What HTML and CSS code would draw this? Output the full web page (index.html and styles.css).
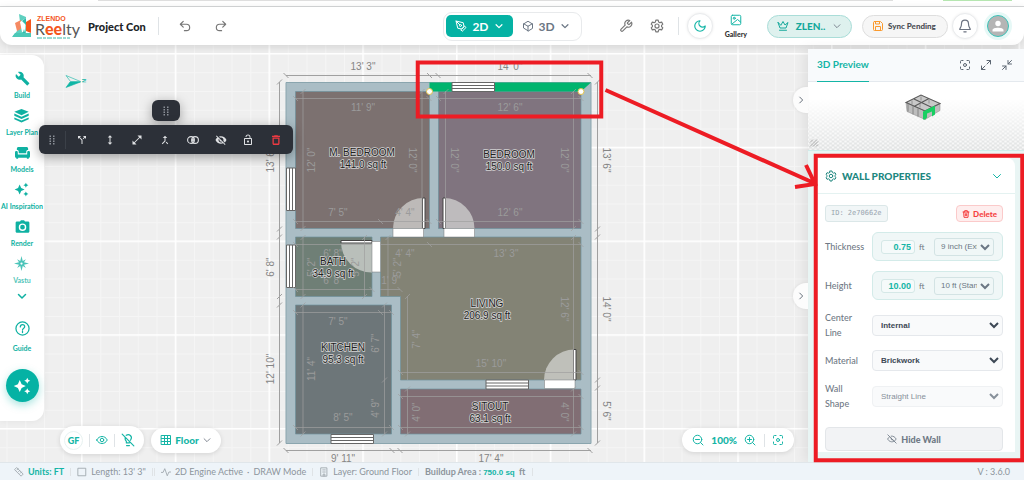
FILE: index.html
```html
<!DOCTYPE html>
<html lang="en">
<head>
<meta charset="utf-8">
<meta name="viewport" content="width=device-width, initial-scale=1">
<title>Project Con - Floor Planner</title>
<link rel="stylesheet" href="styles.css">
</head>
<body>
<svg class="sprite" aria-hidden="true">
  <symbol id="undo" viewBox="0 0 24 24"><path d="M9 14 4 9l5-5M4 9h10.500a5.500 5.500 0 0 1 0 11H11"/></symbol>
  <symbol id="redo" viewBox="0 0 24 24"><path d="m15 14 5-5-5-5M20 9H9.500a5.500 5.500 0 0 0 0 11H13"/></symbol>
  <symbol id="down" viewBox="0 0 24 24"><path d="m5 9 7 7 7-7"/></symbol>
  <symbol id="right" viewBox="0 0 24 24"><path d="m9 5 7 7-7 7"/></symbol>
  <symbol id="pen" viewBox="0 0 24 24"><path d="m12 19 7-7 3 3-7 7zM18 13l-1.500-7.500L2 2l3.500 14.500L13 18zM2 2l7.600 7.600"/><circle cx="11" cy="11" r="2"/></symbol>
  <symbol id="cube" viewBox="0 0 24 24"><path d="M21 16V8l-9-5.500L3 8v8l9 5.500zM3.300 7.500 12 12.500l8.700-5M12 22v-9.500"/></symbol>
  <symbol id="wrench" viewBox="0 0 24 24"><path d="M14.700 6.300a1 1 0 0 0 0 1.400l1.600 1.600a1 1 0 0 0 1.400 0l3.770-3.770a6 6 0 0 1-7.940 7.940l-6.910 6.910a2.120 2.120 0 0 1-3-3l6.910-6.910a6 6 0 0 1 7.940-7.940z"/></symbol>
  <symbol id="gear" viewBox="0 0 24 24"><path d="M10 2h4l.7 3 2.300 1.300 3-.9 2 3.500-2.200 2.100v2l2.200 2.100-2 3.500-3-.9-2.300 1.300-.7 3h-4l-.7-3L7 17.700l-3 .9-2-3.500L4.200 13v-2L2 8.900l2-3.500 3 .9L9.300 5z"/><circle cx="12" cy="12" r="3.500"/></symbol>
  <symbol id="moon" viewBox="0 0 24 24"><path d="M12 3a6 6 0 0 0 9 9 9 9 0 1 1-9-9z"/></symbol>
  <symbol id="image" viewBox="0 0 24 24"><path d="M5 2.500h14a2.500 2.500 0 0 1 2.500 2.500v14a2.500 2.500 0 0 1-2.500 2.500H5A2.500 2.500 0 0 1 2.500 19V5A2.500 2.500 0 0 1 5 2.500zM4 20l11-9 6 5"/><circle cx="8.500" cy="8.500" r="2"/></symbol>
  <symbol id="crown" viewBox="0 0 24 24"><path d="m2 5 4 11h12l4-11-6 5-4-7-4 7zM5 20.500h14"/></symbol>
  <symbol id="save" viewBox="0 0 24 24"><path d="M5 3h12l4 4v12a2 2 0 0 1-2 2H5a2 2 0 0 1-2-2V5a2 2 0 0 1 2-2zM7 3v5h8V3M7 21v-8h10v8"/></symbol>
  <symbol id="bell" viewBox="0 0 24 24"><path d="M6 8a6 6 0 0 1 12 0c0 7 3 7 3 10H3c0-3 3-3 3-10M10 22h4"/></symbol>
  <symbol id="focus" viewBox="0 0 24 24"><path d="M3 8V5a2 2 0 0 1 2-2h3M16 3h3a2 2 0 0 1 2 2v3M21 16v3a2 2 0 0 1-2 2h-3M8 21H5a2 2 0 0 1-2-2v-3"/><circle cx="12" cy="12" r="3"/></symbol>
  <symbol id="expand" viewBox="0 0 24 24"><path d="M14 3h7v7M10 21H3v-7M21 3l-7 7M3 21l7-7"/></symbol>
  <symbol id="shrink" viewBox="0 0 24 24"><path d="M14 3v7h7M3 14h7v7M14 10l7-7M10 14l-7 7"/></symbol>
  <symbol id="trash" viewBox="0 0 24 24"><path d="M3 6h18M5 6l1 16h12l1-16M8 6V2h8v4M10 11v6M14 11v6"/></symbol>
  <symbol id="eye" viewBox="0 0 24 24"><path d="M1.500 12C4 7 8 5 12 5s8 2 10.500 7C20 17 16 19 12 19S4 17 1.500 12z"/><circle cx="12" cy="12" r="3.500"/></symbol>
  <symbol id="eye-off" viewBox="0 0 24 24"><path d="M10 5c5-.7 9.500 2.500 12 7l-2.500 3.500M6 7c-2 1.200-3.600 3-4.500 5C5 18.500 12 21 18 17M10 10a3 3 0 0 0 4 4M2 2l20 20"/></symbol>
  <symbol id="bulb-off" viewBox="0 0 24 24"><path d="M2 2l20 20M9 4c5-3.500 11 2 8 7l-1 1.500M7 8c-.5 3 .8 4.800 2.200 6.500V17h5M9.500 21.500h5"/></symbol>
  <symbol id="grid" viewBox="0 0 24 24"><path d="M3 3h18v18H3zM3 9h18M3 15h18M9 3v18M15 3v18"/></symbol>
  <symbol id="zoom-out" viewBox="0 0 24 24"><circle cx="11" cy="11" r="8.500"/><path d="m22 22-5-5M7 11h8"/></symbol>
  <symbol id="zoom-in" viewBox="0 0 24 24"><circle cx="11" cy="11" r="8.500"/><path d="m22 22-5-5M7 11h8M11 7v8"/></symbol>
  <symbol id="help" viewBox="0 0 24 24"><circle cx="12" cy="12" r="10.500"/><path d="M8.500 9.500c0-5 7-4.500 7-.5 0 2.500-3.500 2.500-3.500 5.500M12 16.500v2"/></symbol>
  <symbol id="ruler" viewBox="0 0 24 24"><path d="m7 2 15 15-5 5L2 7zM7 7l3-3M11 11l3-3M15 15l3-3"/></symbol>
  <symbol id="square" viewBox="0 0 24 24"><path d="M3 3h18v18H3z"/></symbol>
  <symbol id="pulse" viewBox="0 0 24 24"><path d="M1 13h4l4-9 6 17 4-9h4"/></symbol>
  <symbol id="building" viewBox="0 0 24 24"><path d="M5 2h14v20H5zM9 7h2M13 7h2M9 12h2M13 12h2M10 22v-5h4v5"/></symbol>
  <symbol id="build" viewBox="0 0 24 24"><path d="M22.700 19l-9.100-9.100c.9-2.300.4-5-1.500-6.900-2-2-5-2.400-7.400-1.300L9 6 6 9 1.600 4.700C.4 7.100.9 10.100 2.900 12.100c1.900 1.900 4.600 2.400 6.900 1.500l9.100 9.100c.4.4 1 .4 1.400 0l2.300-2.300c.5-.4.5-1.100.1-1.400z"/></symbol>
  <symbol id="layers" viewBox="0 0 24 24"><path d="M12 1.500 23.500 6 12 11.500.5 6zM.5 8.800 12 14l11.500-5.200v3.400L12 17.500.5 12.200zM.5 15 12 20l11.500-5v3L12 23 .5 18z"/></symbol>
  <symbol id="sofa" viewBox="0 0 24 24"><path d="M3 8V6c0-2 1-3 3-3h12c2 0 3 1 3 3v2c-2 0-3 1-3 3v2H6v-2c0-2-1-3-3-3z"/><path d="M0 12c0-3 4.500-3 4.500 0v3h15v-3c0-3 4.500-3 4.500 0v6c0 1.500-1 2.500-2 2.500V22h-3v-1.500H5V22H2v-1.500c-1 0-2-1-2-2.500z"/></symbol>
  <symbol id="sparkle" viewBox="0 0 24 24"><path d="M19 9l1.250-2.750L23 5l-2.750-1.250L19 1l-1.250 2.750L15 5l2.750 1.250L19 9zm-7.500.5L9 4 6.500 9.500 1 12l5.500 2.500L9 20l2.500-5.500L17 12l-5.500-2.500zM19 15l-1.250 2.750L15 19l2.750 1.250L19 23l1.250-2.750L23 19l-2.750-1.250L19 15z"/></symbol>
  <symbol id="camera" viewBox="0 0 24 24"><path fill-rule="evenodd" d="M3 4h5l1.500-2h5L16 4h5c1 0 2 1 2 2v14c0 1-1 2-2 2H3c-1 0-2-1-2-2V6c0-1 1-2 2-2zm9 3a6 6 0 1 0 0 12 6 6 0 0 0 0-12zm0 2.200a3.800 3.800 0 1 1 0 7.600 3.800 3.800 0 0 1 0-7.600z"/></symbol>
  <symbol id="compass" viewBox="0 0 24 24"><path d="m12 0 2 8 5-3-3 5 8 2-8 2 3 5-5-3-2 8-2-8-5 3 3-5-8-2 8-2-3-5 5 3z"/><circle cx="12" cy="12" r="1.800" fill="#fff"/></symbol>
  <symbol id="grip" viewBox="0 0 24 24"><path d="M7 3h3v3H7zM14 3h3v3h-3zM7 8h3v3H7zM14 8h3v3h-3zM7 13h3v3H7zM14 13h3v3h-3zM7 18h3v3H7zM14 18h3v3h-3z"/></symbol>
  <symbol id="split" viewBox="0 0 24 24"><path d="M14 4l2.290 2.290-2.880 2.880 1.420 1.420 2.880-2.880L20 10V4h-6zm-4 0H4v6l2.290-2.290 4.710 4.700V20h2v-8.410l-5.290-5.300L10 4z"/></symbol>
  <symbol id="height" viewBox="0 0 24 24"><path d="M13 7h3.500L12 2.500 7.500 7H11v10H7.500l4.500 4.500 4.500-4.500H13z"/></symbol>
  <symbol id="diagonal" viewBox="0 0 24 24"><path d="M21 11V3h-8l3.290 3.290-10 10L3 13v8h8l-3.290-3.290 10-10z"/></symbol>
  <symbol id="merge" viewBox="0 0 24 24"><path d="M17 20.410L18.410 19 15 15.590 13.590 17 17 20.410zM7.500 8H11v5.590L5.590 19 7 20.410l6-6V8h3.500L12 3.500 7.500 8z"/></symbol>
  <symbol id="join" viewBox="0 0 24 24"><g fill="none" stroke="currentColor" stroke-width="2.200"><circle cx="8" cy="12" r="6.800"/><circle cx="16" cy="12" r="6.800"/></g><path d="M12 7.500c-2.600 2.600-2.600 6.400 0 9 2.600-2.600 2.600-6.400 0-9z"/></symbol>
  <symbol id="hidden" viewBox="0 0 24 24"><path d="M12 7c2.760 0 5 2.240 5 5 0 .65-.13 1.260-.36 1.830l2.920 2.920c1.510-1.260 2.700-2.890 3.430-4.750-1.730-4.390-6-7.500-11-7.500-1.400 0-2.740.25-3.980.7l2.160 2.160C10.740 7.130 11.350 7 12 7zM2 4.270l2.280 2.280.46.46C3.080 8.300 1.780 10.020 1 12c1.730 4.390 6 7.500 11 7.500 1.550 0 3.030-.3 4.380-.84l.42.42L19.730 22 21 20.730 3.270 3 2 4.270zM7.530 9.800l1.550 1.550c-.05.21-.08.43-.08.65 0 1.660 1.340 3 3 3 .22 0 .44-.03.65-.08l1.550 1.550c-.67.33-1.410.53-2.200.53-2.760 0-5-2.240-5-5 0-.79.2-1.530.53-2.200z"/></symbol>
  <symbol id="lock" viewBox="0 0 24 24"><path d="M12 17c1.100 0 2-.9 2-2s-.9-2-2-2-2 .9-2 2 .9 2 2 2zm6-9h-1V6c0-2.760-2.240-5-5-5S7 3.240 7 6h1.900c0-1.710 1.390-3.100 3.100-3.100 1.710 0 3.100 1.390 3.100 3.100v2H6c-1.100 0-2 .9-2 2v10c0 1.100.9 2 2 2h12c1.100 0 2-.9 2-2V10c0-1.100-.9-2-2-2zm0 12H6V10h12v10z"/></symbol>
  <symbol id="delete" viewBox="0 0 24 24"><path d="M5 19c0 1.700 1 3 3 3h8c2 0 3-1.300 3-3V7H5v12zM7.500 9.500h9V19H7.500V9.500zM16 3.500 15 2.500H9l-1 1H4V6h16V3.500z"/></symbol>
</svg>

<div class="app">
  <svg class="canvas" role="img" aria-label="Ground floor plan">
    <defs>
      <pattern id="minor" x="81.500" y="53.500" width="18.750" height="18.750" patternUnits="userSpaceOnUse"><path d="M0 .5H19M.5 0V19" stroke="#f5f5f5" fill="none"/></pattern>
      <pattern id="major" x="81" y="53" width="93.750" height="93.750" patternUnits="userSpaceOnUse"><path d="M0 .5H94M.5 0V94" stroke="#fff" stroke-width="2" fill="none"/></pattern>
      <g id="win"><path class="window" d="M0 0H42.500V9H0zM0 3H42.500M0 6H42.500"/></g>
      <path id="tb" d="M-2.500-2.500 2.500 2.500"/>
      <path id="tf" d="M-2.500 2.500 2.500-2.500"/>
    </defs>
    <rect width="100%" height="100%" fill="#efefef"/>
    <rect width="100%" height="100%" fill="url(#minor)"/>
    <rect width="100%" height="100%" fill="url(#major)"/>

    <path class="wall" d="M286 82.500H591V443.500H286z"/>
    <g class="rooms">
      <path fill="#7c7170" d="M295.500 91.500H429.500V228.500H295.500z"/>
      <path fill="#80747f" d="M438.500 91.500H581V228.500H438.500z"/>
      <path fill="#6f7f76" d="M295.500 237H372V296.500H295.500z"/>
      <path fill="#6d7679" d="M295.500 305H391.500V434H295.500z"/>
      <path fill="#838375" d="M380.500 237H581V380H400.500V296.500H380.500z"/>
      <path fill="#816e74" d="M400.500 389H581V434H400.500z"/>
    </g>
    <path fill="#00b46e" d="M429.500 82.500H591L581 91.500H429.500z"/>

    <use href="#win" x="452" y="82.500"/>
    <use href="#win" x="331" y="434.500"/>
    <use href="#win" x="486" y="380"/>
    <use href="#win" transform="translate(295.500 168) rotate(90)"/>
    <use href="#win" transform="translate(295.500 245) rotate(90)"/>

    <g class="doors">
      <path class="swing" d="M423.500 228.500V198a30.500 30.500 0 0 0-30.500 30.500z"/>
      <path class="swing" d="M444 228.500V198a30.500 30.500 0 0 1 30.500 30.500z"/>
      <path class="swing" d="M372 242H341a30.500 30.500 0 0 0 31 30.500z"/>
      <path class="swing" d="M574.500 380V349.500A30.500 30.500 0 0 0 544 380z"/>
      <path class="leaf" d="M422.500 198h2.500v30.500h-2.500zM443 198h2.500v30.500H443zM341 240.500h31v2.500h-31zM573.500 349.500h2.500V380h-2.500z"/>
      <path class="gap" d="M393 228.500h30.500v8.500H393zM444 228.500h30.500v8.500H444zM372 241.500h8.500V272H372zM544.500 380H575v8.500h-30.500z"/>
    </g>

    <g class="dim-lines">
      <path d="M286 75.500H591M279.500 82V443M597.500 82V443M286 450.500H591"/>
      <use href="#tb" x="286" y="75.500"/><use href="#tb" x="429.500" y="75.500"/><use href="#tb" x="438" y="75.500"/><use href="#tb" x="590" y="75.500"/>
      <use href="#tb" x="286" y="450.500"/><use href="#tb" x="392" y="450.500"/><use href="#tb" x="400" y="450.500"/><use href="#tb" x="590" y="450.500"/>
      <use href="#tf" x="279.500" y="82"/><use href="#tf" x="279.500" y="229"/><use href="#tf" x="279.500" y="237"/><use href="#tf" x="279.500" y="296.500"/><use href="#tf" x="279.500" y="305"/><use href="#tf" x="279.500" y="443"/>
      <use href="#tf" x="597.500" y="82"/><use href="#tf" x="597.500" y="229"/><use href="#tf" x="597.500" y="237"/><use href="#tf" x="597.500" y="380"/><use href="#tf" x="597.500" y="388"/><use href="#tf" x="597.500" y="443"/>
    </g>
    <g class="dim-lines inner">
      <path d="M295 98.500H429M303 91V229M422 91V229M295 221.500H429M438 98.500H581M445.500 91V229M573.500 91V229M438 221.500H581M295 244.500H372M295 289.500H372M303 237V296M364.500 237V296M380 244.500H581M388 237V296M380 289.500H400M573.500 237V380M400 372.500H581M407.500 296V380M295 312.500H391M303 305V434M384.500 305V434M295 427.500H391M400 396.500H581M400 427.500H581M407.500 389V434M573.500 389V434"/>
      <use href="#tb" x="295.500" y="98.500"/><use href="#tb" x="429" y="98.500"/><use href="#tb" x="438.500" y="98.500"/><use href="#tb" x="581" y="98.500"/>
      <use href="#tb" x="295.500" y="221.500"/><use href="#tb" x="380.500" y="221.500"/><use href="#tb" x="429" y="221.500"/><use href="#tb" x="438.500" y="221.500"/><use href="#tb" x="581" y="221.500"/>
      <use href="#tf" x="303" y="91.500"/><use href="#tf" x="446" y="91.500"/><use href="#tf" x="422" y="91.500"/><use href="#tf" x="573.500" y="91.500"/>
      <use href="#tf" x="303" y="228.500"/><use href="#tf" x="573.500" y="228.500"/><use href="#tf" x="303" y="237.500"/><use href="#tf" x="364.500" y="237.500"/><use href="#tf" x="388" y="237.500"/><use href="#tf" x="573.500" y="237.500"/>
      <use href="#tb" x="295.500" y="244.500"/><use href="#tb" x="429.500" y="244.500"/><use href="#tb" x="581" y="244.500"/><use href="#tb" x="295.500" y="289.500"/><use href="#tb" x="372" y="289.500"/><use href="#tb" x="400" y="289.500"/>
      <use href="#tf" x="303" y="296.500"/><use href="#tf" x="364.500" y="296.500"/><use href="#tf" x="407.500" y="296.500"/><use href="#tf" x="303" y="305"/><use href="#tf" x="384.500" y="305"/>
      <use href="#tb" x="295.500" y="312.500"/><use href="#tb" x="380.500" y="312.500"/><use href="#tb" x="391.500" y="312.500"/><use href="#tf" x="384.500" y="380"/>
      <use href="#tb" x="400.500" y="372.500"/><use href="#tb" x="581" y="372.500"/><use href="#tb" x="400.500" y="396.500"/><use href="#tb" x="581" y="396.500"/>
      <use href="#tf" x="303" y="434"/><use href="#tf" x="384.500" y="434"/><use href="#tf" x="407.500" y="389"/><use href="#tf" x="407.500" y="434"/><use href="#tf" x="573.500" y="389"/><use href="#tf" x="573.500" y="434"/>
      <use href="#tb" x="295.500" y="427.500"/><use href="#tb" x="391.500" y="427.500"/><use href="#tb" x="400.500" y="427.500"/><use href="#tb" x="581" y="427.500"/>
    </g>

    <g class="dims">
      <text x="363" y="70">13' 3"</text><text x="510" y="70">14' 0"</text>
      <text x="343" y="462">9' 11"</text><text x="491" y="462">17' 4"</text>
      <text transform="translate(274 160) rotate(-90)">13' 6"</text>
      <text transform="translate(274 267) rotate(-90)">6' 8"</text>
      <text transform="translate(274 369) rotate(-90)">12' 10"</text>
      <text transform="translate(603 160) rotate(90)">13' 6"</text>
      <text transform="translate(603 309) rotate(90)">14' 0"</text>
      <text transform="translate(603 411) rotate(90)">5' 6"</text>
    </g>
    <g class="dims inner">
      <text x="363" y="111">11' 9"</text><text x="510" y="111">12' 6"</text>
      <text x="338" y="216">7' 5"</text><text x="405" y="216">4' 4"</text><text x="510" y="216">12' 6"</text>
      <text x="333" y="257">6' 8"</text><text x="333" y="284">6' 8"</text><text x="405" y="257">4' 4"</text><text x="391" y="284">1' 9"</text>
      <text x="506" y="257">13' 3"</text><text x="338" y="325">7' 5"</text><text x="343" y="421">8' 5"</text><text x="491" y="367">15' 10"</text>
      <text transform="translate(315 160) rotate(-90)">12' 0"</text>
      <text transform="translate(409 160) rotate(90)">12' 0"</text>
      <text transform="translate(451 160) rotate(90)">12' 0"</text>
      <text transform="translate(561 160) rotate(90)">12' 0"</text>
      <text transform="translate(315 267) rotate(-90)">5' 2"</text>
      <text transform="translate(359 267) rotate(-90)">5' 2"</text>
      <text transform="translate(401 267) rotate(-90)">5' 2"</text>
      <text transform="translate(561 309) rotate(90)">12' 6"</text>
      <text transform="translate(420 339) rotate(-90)">7' 4"</text>
      <text transform="translate(379 343) rotate(-90)">6' 7"</text>
      <text transform="translate(379 408) rotate(-90)">4' 9"</text>
      <text transform="translate(315 369) rotate(-90)">11' 4"</text>
      <text transform="translate(420 412) rotate(-90)">4' 0"</text>
      <text transform="translate(561 412) rotate(90)">4' 0"</text>
    </g>
    <g class="room-names">
      <text x="362" y="156">M. BEDROOM</text><text x="363" y="168">141.0 sq ft</text>
      <text x="509" y="158">BEDROOM</text><text x="509" y="170">150.0 sq ft</text>
      <text x="333" y="265">BATH</text><text x="333" y="277">34.9 sq ft</text>
      <text x="343" y="351">KITCHEN</text><text x="343" y="363">95.3 sq ft</text>
      <text x="487" y="307">LIVING</text><text x="487" y="319">206.9 sq ft</text>
      <text x="490" y="410">SITOUT</text><text x="490" y="422">63.1 sq ft</text>
    </g>
    <g fill="#fff" stroke="#e3c34b"><circle cx="429.500" cy="91.500" r="3"/><circle cx="581" cy="91.500" r="3"/></g>
    <g class="north"><path d="M66 75.500 80.500 81.500H70.500z" fill="none"/><path d="M66 87.500 80.500 82H70z"/><text transform="translate(82 79) rotate(90)">N</text></g>
  </svg>

  <div class="browser-edge" aria-hidden="true"><span class="address"></span><span class="update"></span></div>

  <header class="topbar">
    <div class="topbar-left">
      <svg class="logo" viewBox="0 0 68 27" role="img" aria-label="Zlendo Realty">
        <path fill="#5fd0c0" d="M7 1 14 4V23H1L5 18 8 9z"/><path fill="#f58a63" d="M3 10 9 7V16L5 18z"/><path fill="#fff" d="M8 9 14 5 13 19H10z"/><path fill="#2fbcab" d="M10 8 14 5V12zM10 23 12 16 14 23z"/><path fill="#f4571e" d="M14 9 19 6V20L14 18z"/><path fill="#4cc8b7" d="M14 20H19V24H0L3 20H11z"/>
        <text x="25" y="8" class="logo-top">ZLENDO</text>
        <text x="23" y="22" class="logo-main">R<tspan class="logo-accent">ee</tspan>lty</text>
        <path d="M25 25H58" stroke="#3ab8aa" stroke-width="1" stroke-dasharray="5 1 3 1"/>
      </svg>
      <h1 class="project">Project Con</h1>
      <span class="rule tall"></span>
      <div class="history">
        <button class="bare" aria-label="Undo"><svg class="icon i14"><use href="#undo"/></svg></button>
        <button class="bare" aria-label="Redo"><svg class="icon i14"><use href="#redo"/></svg></button>
      </div>
    </div>
    <div class="modes">
      <button class="mode active"><svg class="icon i12"><use href="#pen"/></svg>2D<svg class="icon i10 bold"><use href="#down"/></svg></button>
      <button class="mode"><svg class="icon i12"><use href="#cube"/></svg>3D<svg class="icon i10 bold"><use href="#down"/></svg></button>
    </div>
    <div class="topbar-right">
      <button class="bare tool" aria-label="Tools"><svg class="icon i14"><use href="#wrench"/></svg></button>
      <button class="bare tool" aria-label="Settings"><svg class="icon i14"><use href="#gear"/></svg></button>
      <span class="rule tall"></span>
      <button class="round teal" aria-label="Dark mode"><svg class="icon i14"><use href="#moon"/></svg></button>
      <button class="bare gallery"><svg class="icon i12 teal"><use href="#image"/></svg>Gallery</button>
      <button class="plan"><svg class="icon i12"><use href="#crown"/></svg>ZLEN..<svg class="icon i10 grey"><use href="#down"/></svg></button>
      <button class="sync"><svg class="icon i12 orange"><use href="#save"/></svg>Sync Pending</button>
      <button class="round grey" aria-label="Notifications"><svg class="icon i14"><use href="#bell"/></svg></button>
      <button class="avatar" aria-label="Account"><svg viewBox="0 0 20 20"><circle cx="10" cy="7.500" r="2.700"/><path d="M4.500 15.500v-1.500c0-3 11-3 11 0v1.500z"/></svg></button>
    </div>
  </header>

  <main class="workspace">
    <nav class="sidebar" aria-label="Tools">
      <a href="#b" class="side-item"><svg class="solid i15"><use href="#build"/></svg>Build</a>
      <a href="#l" class="side-item"><svg class="solid i15"><use href="#layers"/></svg>Layer Plan</a>
      <a href="#m" class="side-item"><svg class="solid i15"><use href="#sofa"/></svg>Models</a>
      <a href="#a" class="side-item"><svg class="solid i15"><use href="#sparkle"/></svg>AI Inspiration</a>
      <a href="#r" class="side-item"><svg class="solid i15"><use href="#camera"/></svg>Render</a>
      <a href="#v" class="side-item faded"><svg class="solid i15"><use href="#compass"/></svg>Vastu</a>
      <button class="bare more" aria-label="More tools"><svg class="icon i12 bold"><use href="#down"/></svg></button>
      <a href="#g" class="side-item guide"><svg class="icon i15"><use href="#help"/></svg>Guide</a>
      <button class="assistant" aria-label="AI assistant"><svg class="solid i18"><use href="#sparkle"/></svg></button>
    </nav>

    <section class="stage" aria-label="Drawing controls">
      <div class="dock">
        <div class="dock-left">
          <div class="pill views">
            <button class="floor-code">GF</button><span class="rule"></span>
            <button class="bare" aria-label="Visibility"><svg class="icon i12"><use href="#eye"/></svg></button><span class="rule"></span>
            <button class="bare" aria-label="Lights off"><svg class="icon i14"><use href="#bulb-off"/></svg></button>
          </div>
          <button class="pill floor"><svg class="icon i12"><use href="#grid"/></svg>Floor<svg class="icon i10 grey"><use href="#down"/></svg></button>
        </div>
        <div class="pill zoom">
          <button class="bare" aria-label="Zoom out"><svg class="icon i12"><use href="#zoom-out"/></svg></button>
          <span>100%</span>
          <button class="bare" aria-label="Zoom in"><svg class="icon i12"><use href="#zoom-in"/></svg></button>
          <span class="rule"></span>
          <button class="bare" aria-label="Fit to view"><svg class="icon i12"><use href="#focus"/></svg></button>
        </div>
      </div>
    </section>

    <aside class="panel">
      <button class="handle first" aria-label="Collapse preview"><svg class="icon i10"><use href="#right"/></svg></button>
      <button class="handle second" aria-label="Collapse properties"><svg class="icon i10"><use href="#right"/></svg></button>
      <div class="preview-bar">
        <a href="#preview" class="tab">3D Preview</a>
        <div class="preview-tools">
          <button class="bare" aria-label="Center"><svg class="icon i12"><use href="#focus"/></svg></button>
          <button class="bare" aria-label="Expand"><svg class="icon i12"><use href="#expand"/></svg></button>
          <button class="bare" aria-label="Shrink"><svg class="icon i12"><use href="#shrink"/></svg></button>
        </div>
      </div>
      <svg class="preview" viewBox="0 0 216 69" preserveAspectRatio="xMidYMid slice" role="img" aria-label="3D preview of the house">
        <defs>
          <linearGradient id="fade" x1="0" y1="0" x2="0" y2="1"><stop offset=".25" stop-color="#fff"/><stop offset="1" stop-color="#fff" stop-opacity="0"/></linearGradient>
          <pattern id="mesh" width="5" height="4" patternUnits="userSpaceOnUse"><path d="M0 0 5 4M5 0 0 4" stroke="#d0d4d4" stroke-width=".7"/></pattern>
        </defs>
        <rect width="216" height="69" fill="#f6f6f6"/><rect width="216" height="69" fill="url(#mesh)"/><rect width="216" height="69" fill="url(#fade)"/>
        <path d="M98 21 113 13.500 132 22 117 30z" fill="#c9c9c9"/>
        <path d="M98 21 117 29.500V38L99 30zM117 29.500 132 22V29L117 38z" fill="#bdbdbd" stroke="#888" stroke-width=".5"/>
        <path d="M98 21 113 13.500 132 22 117 29.500zM106 17.500 124 26M106 25 121 17" fill="none" stroke="#5a5a5a" stroke-width="1.100"/>
        <path d="M104 19v4M113 15v4M121 18v4M112 22v4" stroke="#888" fill="none" stroke-width=".8"/>
        <path d="M100 22v8M105 24v9M110 27v8" stroke="#777" fill="none" stroke-width=".8"/>
        <path fill="#18cf62" d="M115 30 127 24V33L124 35V30L119 32V36L117 38H115z"/>
        <path d="m2 65 7-7M2 61l3-3M5 65l5-5M8 65l2-2" stroke="#888" stroke-width=".7"/>
      </svg>
      <div class="properties">
        <form class="card">
          <h2 class="card-title"><svg class="icon i12"><use href="#gear"/></svg><span>WALL PROPERTIES</span><svg class="icon i12 teal"><use href="#down"/></svg></h2>
          <div class="card-body">
            <div class="id-row"><code class="id">ID: 2e70662e</code><button type="button" class="delete"><svg class="icon i8 bold"><use href="#trash"/></svg>Delete</button></div>
            <div class="field"><label for="thick">Thickness</label>
              <div class="measure"><input id="thick" value="0.75"><span>ft</span><select aria-label="Thickness preset"><option>9 inch (External)</option></select></div></div>
            <div class="field"><label for="height-in">Height</label>
              <div class="measure"><input id="height-in" value="10.00"><span>ft</span><select aria-label="Height preset"><option>10 ft (Standard)</option></select></div></div>
            <div class="field"><label for="center">Center Line</label><select id="center" class="choice"><option>Internal</option></select></div>
            <div class="field"><label for="material">Material</label><select id="material" class="choice"><option>Brickwork</option></select></div>
            <div class="field"><label for="shape">Wall Shape</label><select id="shape" class="choice" disabled><option>Straight Line</option></select></div>
            <button type="button" class="hide"><svg class="icon i10"><use href="#eye-off"/></svg>Hide Wall</button>
          </div>
        </form>
      </div>
    </aside>
  </main>

  <footer class="status">
    <svg class="icon i10"><use href="#ruler"/></svg><b class="teal">Units: FT</b><span class="rule"></span>
    <svg class="icon i10"><use href="#square"/></svg><span>Length: 13' 3"</span><span class="rule double"></span>
    <svg class="icon i10"><use href="#pulse"/></svg><span>2D Engine Active</span><span>·</span><span>DRAW Mode</span><span class="rule"></span>
    <svg class="icon i10"><use href="#building"/></svg><span>Layer: Ground Floor</span><span class="rule"></span>
    <b>Buildup Area : <span class="teal area">750.0 sq</span>&nbsp; ft</b><span class="rule"></span>
    <span class="version">V : 3.6.0</span>
  </footer>

  <button class="grip-pill" aria-label="Move"><svg class="solid i12"><use href="#grip"/></svg></button>
  <div class="wall-tools" role="toolbar" aria-label="Wall tools">
    <button class="bare grip" aria-label="Drag toolbar"><svg class="solid i12"><use href="#grip"/></svg></button>
    <span class="rule"></span>
    <div class="wall-actions">
      <button class="bare" aria-label="Split"><svg class="solid i12"><use href="#split"/></svg></button>
      <button class="bare" aria-label="Height"><svg class="solid i12"><use href="#height"/></svg></button>
      <button class="bare" aria-label="Resize"><svg class="solid i12"><use href="#diagonal"/></svg></button>
      <button class="bare" aria-label="Merge"><svg class="solid i12"><use href="#merge"/></svg></button>
      <button class="bare" aria-label="Join"><svg class="solid i12"><use href="#join"/></svg></button>
      <button class="bare" aria-label="Hide"><svg class="solid i12"><use href="#hidden"/></svg></button>
      <button class="bare" aria-label="Lock"><svg class="solid i12"><use href="#lock"/></svg></button>
      <button class="bare danger" aria-label="Delete wall"><svg class="solid i12"><use href="#delete"/></svg></button>
    </div>
  </div>

  <svg class="callouts" aria-hidden="true">
    <rect x="417.750" y="62.500" width="183.500" height="54"/>
    <rect x="815.750" y="155.750" width="206.500" height="304.500"/>
    <path d="M605.500 90 814 183M806 165 815 184 795 187"/>
  </svg>
</div>
</body>
</html>
```
FILE: styles.css
```css
* { box-sizing: border-box; }
body { margin: 0; font-family: Lato, "Open Sans", sans-serif; color: #6d7782; }
button, select, input { font: inherit; color: inherit; margin: 0; }
button { cursor: pointer; }
a { text-decoration: none; color: inherit; }
.sprite { position: absolute; width: 0; height: 0; }
.app { position: relative; min-height: 100vh; display: flex; flex-direction: column; overflow: hidden; }
.canvas, .callouts { position: absolute; inset: 0; width: 100%; height: 100%; }
.callouts { z-index: 5; pointer-events: none; fill: none; stroke: #ed1c24; stroke-width: 4; }

.icon { flex: none; fill: none; stroke: currentColor; stroke-width: 2; stroke-linecap: round; stroke-linejoin: round; }
.solid { flex: none; fill: currentColor; }
.bold { stroke-width: 3; }
.i8 { width: 8px; height: 8px; }
.i10 { width: 10px; height: 10px; }
.i12 { width: 12px; height: 12px; }
.i14 { width: 14px; height: 14px; }
.i15 { width: 15px; height: 15px; }
.i18 { width: 18px; height: 18px; }
.teal { color: #14b5a6; }
.grey { color: #6b7280; }
.orange { color: #fb9a2d; }
.bare { display: flex; padding: 0; border: 0; background: none; }
.rule { flex: none; width: 1px; height: 13px; background: #dfe3e6; }
.rule.tall { height: 18px; }

/* floor plan */
.wall { fill: #aabdc5; stroke: #8aa5ae; stroke-width: 1; }
.rooms path { stroke: #6f929c; stroke-width: 1; stroke-opacity: .7; }
.window { fill: #fff; stroke: #666; stroke-width: 1; }
.swing { fill: #d9dad7; fill-opacity: .7; }
.leaf { fill: #fff; stroke: #444; stroke-width: 1; }
.gap { fill: #fff; stroke: #777; stroke-width: .5; }
.dim-lines { fill: none; stroke: #a0a0a0; stroke-width: 1; }
.dim-lines.inner { stroke: #9f9f9f; stroke-opacity: .7; }
.dims { font: 10px "Liberation Sans", sans-serif; text-anchor: middle; fill: #858585; }
.dims.inner { fill: #9b9b9b; }
.room-names { font: 10px "Liberation Sans", sans-serif; text-anchor: middle; fill: #222; stroke: #d2d2d2; stroke-width: 1.5px; paint-order: stroke; }
.north { fill: #0fb5a5; stroke: #0fb5a5; stroke-width: .6; }
.north text { font: bold 5px "Liberation Sans", sans-serif; stroke: none; }

/* browser window edge */
.browser-edge { position: relative; flex: none; height: 7px; display: flex; gap: 50px; padding: 0 12px 0 98px; background: #fff; border-bottom: 1px solid #d5d7d8; }
.address { flex: 1; height: 1px; background: #dedede; }
.update { width: 69px; height: 1px; background: #b5e6b0; }

/* header */
.topbar { position: relative; flex: none; height: 38px; display: grid; grid-template-columns: 1fr auto 1fr; align-items: center; padding: 0 11px 0 12px; background: #fff; border-radius: 0 0 12px 12px; box-shadow: 0 2px 8px rgba(0, 0, 0, .12); }
.topbar-left, .topbar-right, .history, .modes { display: flex; align-items: center; }
.topbar-right { justify-content: flex-end; }
.logo { width: 68px; height: 27px; margin-right: 8px; overflow: visible; }
.logo-top { font: bold 7px "Liberation Sans", sans-serif; fill: #f4571e; }
.logo-main { font: 16px Lato, sans-serif; fill: #565656; }
.logo-accent { font-weight: 900; fill: #f4571e; }
.project { margin: 0 12px 0 0; font-size: 11px; font-weight: 900; color: #202327; white-space: nowrap; }
.history { gap: 22px; margin-left: 19px; color: #777; }
.modes { height: 29px; padding: 2px; border: 1px solid #e8eaec; border-radius: 9px; }
.mode { display: flex; align-items: center; gap: 5px; height: 22px; padding: 0 9px; border: 0; border-radius: 5px; background: none; font-size: 12px; font-weight: 700; color: #6b7684; }
.mode.active { background: #05b2a4; color: #fff; }
.tool { color: #777; margin-right: 17px; }
.tool + .tool { margin-right: 14px; }
.round { display: flex; align-items: center; justify-content: center; width: 26px; height: 26px; padding: 0; border: 1px solid #e9ebed; border-radius: 50%; background: #fff; box-shadow: 0 0 3px rgba(0, 0, 0, .08); }
.round.teal { margin-left: 8px; }
.gallery { flex-direction: column; align-items: center; gap: 4px; margin: 0 20px 0 12px; font-size: 7px; font-weight: 900; color: #333; line-height: 8px; }
.plan, .sync { display: flex; align-items: center; height: 23px; border-radius: 12px; font-weight: 900; white-space: nowrap; }
.plan { width: 85px; justify-content: space-between; padding: 0 9px; border: 1px solid #a9ddd8; background: #def1ee; color: #14a89b; font-size: 10px; }
.sync { width: 86px; gap: 4px; padding: 0 9px; margin: 0 4px 0 10px; border: 1px solid #dedede; background: #f6f6f6; color: #4b4f54; font-size: 8px; }
.avatar { width: 22px; height: 22px; padding: 0; margin: 0 4px 0 9px; border: 1px solid #3cc3b8; border-radius: 50%; background: #b5b5b5; box-shadow: 0 0 0 3px #e6f8f6; }
.avatar svg { display: block; fill: #fff; }

/* sidebar */
.workspace { position: relative; flex: 1; display: flex; align-items: stretch; min-height: 417px; }
.sidebar { align-self: flex-start; width: 44px; margin-top: 10px; padding: 16px 0 19px; display: flex; flex-direction: column; align-items: center; background: #fff; border-radius: 0 12px 12px 0; box-shadow: 0 0 6px rgba(0, 0, 0, .06); color: #0fb1a2; }
.side-item { display: flex; flex-direction: column; align-items: center; gap: 5px; height: 37px; font-size: 7px; font-weight: 700; line-height: 9px; white-space: nowrap; }
.faded { opacity: .75; }
.more { margin-top: -3px; }
.guide { margin-top: 19px; gap: 8px; }
.assistant { display: flex; align-items: center; justify-content: center; width: 33px; height: 33px; margin-top: 11px; padding: 0; border: 0; border-radius: 50%; background: #05b2a4; color: #fff; box-shadow: 0 3px 8px rgba(5, 178, 164, .35); }

/* bottom docks */
.stage { flex: 1; display: flex; flex-direction: column; justify-content: flex-end; padding: 0 14px 8px 16px; }
.dock, .dock-left { display: flex; align-items: center; }
.dock { justify-content: space-between; }
.dock-left { gap: 7px; }
.pill { display: flex; align-items: center; border: 0; border-radius: 14px; background: #fff; color: #14b5a6; font-weight: 900; box-shadow: 0 1px 5px rgba(0, 0, 0, .12); }
.views { width: 84px; height: 28px; padding: 0 9px 0 4px; justify-content: space-between; }
.floor-code { width: 19px; height: 19px; padding: 0; border: 1px solid #e8f2f1; border-radius: 50%; background: #fff; font-size: 9px; }
.floor { width: 70px; height: 25px; padding: 0 9px; justify-content: space-between; font-size: 10px; }
.zoom { width: 112px; height: 24px; padding: 0 10px; justify-content: space-between; font-size: 10px; }

/* right panel */
.panel { position: relative; flex: none; width: 216px; margin-top: 4px; display: flex; flex-direction: column; background: #fff; box-shadow: -3px 0 12px rgba(0, 0, 0, .08); }
.handle { position: absolute; left: -15px; display: flex; align-items: center; justify-content: center; width: 15px; height: 26px; padding: 0; border: 0; border-radius: 13px 0 0 13px; background: #fcfcfc; color: #4b5563; box-shadow: -1px 0 3px rgba(0, 0, 0, .06); }
.handle.first { top: 38px; }
.handle.second { top: 234px; }
.preview-bar { height: 33px; display: flex; align-items: stretch; justify-content: space-between; padding: 0 11px 0 9px; background: #f8fafc; border-bottom: 1px solid #e4e9ee; }
.tab { margin-bottom: -1px; border-bottom: 1px solid #14b5a6; color: #14b5a6; font-size: 10px; font-weight: 700; line-height: 31px; }
.preview-tools { display: flex; align-items: center; gap: 9px; color: #5c6672; }
.preview { display: block; width: 100%; height: 69px; border-bottom: 1px solid #cfeceb; }
.properties { flex: 1; padding: 7px 9px 10px 10px; background: #e9f5f4; }
.card { background: #fff; border-radius: 0 8px 0 0; }
.card-title { display: flex; align-items: center; gap: 5px; height: 36px; margin: 0; padding: 0 12px 0 7px; border-bottom: 1px solid #e4f2f1; color: #20877f; font-size: 10px; font-weight: 900; }
.card-title span { flex: 1; }
.card-body { display: flex; flex-direction: column; gap: 10px; padding: 11px 12px 1px 7px; font-size: 9px; }
.id-row { display: flex; align-items: center; justify-content: space-between; }
.id { padding: 0 5px; border: 1px solid #dbe7e8; border-radius: 3px; background: #f1f6f7; color: #9aa5b0; font: 7px/15px "DejaVu Sans Mono", monospace; }
.delete { display: flex; align-items: center; gap: 3px; height: 17px; padding: 0 5px; border: 1px solid #fbcaca; border-radius: 4px; background: #feeeee; color: #f53f3f; font-size: 8px; font-weight: 900; }
.field { display: grid; grid-template-columns: 47px 1fr; align-items: center; }
.field label { font-size: 9px; font-weight: 500; line-height: 15px; padding-right: 6px; }
.field label, .hide { color: #6f7985; }
.measure { display: flex; align-items: center; height: 29px; padding: 0 8px; gap: 4px; border: 1px solid #d3ebe9; border-radius: 6px; background: #f0f7f7; font-size: 8px; }
.measure input { width: 34px; height: 14px; padding: 0 3px; border: 1px solid #d5e8e7; border-radius: 3px; background: #f5fafa; color: #14b5a6; font: bold 9px "Liberation Sans", sans-serif; text-align: right; }
.measure select { width: 60px; height: 18px; margin-left: auto; padding: 0 0 0 2px; border: 1px solid #d3e3e4; border-radius: 3px; background: #f0f7f7; font: 8px "Liberation Sans", sans-serif; color: #6b7784; }
.choice { width: 100%; height: 21px; padding: 0 0 0 4px; border: 1px solid #e5e8ec; border-radius: 4px; background: #f9fafb; color: #3d4855; font: bold 8px "Liberation Sans", sans-serif; }
.choice:disabled { opacity: 1; border-color: #eff1f3; color: #87909a; font-weight: 400; }
.hide { display: flex; align-items: center; justify-content: center; gap: 4px; height: 24px; margin-top: 6px; border: 1px solid #e3e6e9; border-radius: 4px; background: #f2f3f5; font-size: 9px; font-weight: 900; }

/* status bar */
.status { position: relative; flex: none; height: 18px; display: flex; align-items: center; gap: 4px; padding: 0 14px; background: #eef4f9; border-top: 1px solid #e0e6ea; color: #8d959c; font-size: 9px; white-space: nowrap; }
.status .rule { height: 8px; margin: 0 2px; }
.status .icon { color: #9ba3aa; }
.status .double { width: 3px; border: solid #dfe3e6; border-width: 0 1px; background: none; }
.area { font: bold 8px "Liberation Sans", sans-serif; }
.status .version { margin-left: auto; }

/* floating wall toolbar */
.grip-pill, .wall-tools { position: absolute; z-index: 4; border: 0; background: #2c3038; color: #dfe1e4; box-shadow: 0 3px 12px rgba(0, 0, 0, .35); }
.grip-pill { left: 152px; top: 100px; display: flex; align-items: center; justify-content: center; width: 28px; height: 21px; padding: 0; border-radius: 6px; }
.wall-tools { left: 39px; top: 125px; display: flex; align-items: center; width: 254px; height: 29px; padding: 0 11px 0 7px; border-radius: 6px; }
.grip-pill svg, .grip { color: #8b9097; }
.wall-tools .rule { height: 18px; margin: 0 10px 0 7px; background: #3b4048; }
.wall-actions { flex: 1; display: flex; justify-content: space-between; }
.danger { color: #ee3a42; }
```
